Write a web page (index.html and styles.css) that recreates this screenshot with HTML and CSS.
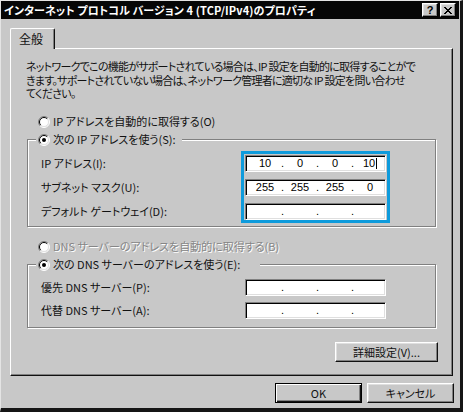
FILE: index.html
```html
<!DOCTYPE html>
<html lang="ja">
<head>
<meta charset="utf-8">
<title>インターネット プロトコル バージョン 4 (TCP/IPv4)のプロパティ</title>
<link rel="stylesheet" href="styles.css">
</head>
<body>
<div class="window">
  <div class="titlebar">
    <span class="title">インターネット プロトコル バージョン 4 (TCP/IPv4)のプロパティ</span>
    <div class="tbtns">
      <span class="tbtn help">?</span>
      <span class="tbtn close"><svg width="8" height="7" viewBox="0 0 8 7" shape-rendering="crispEdges"><g fill="#000"><rect x="0" y="0" width="2" height="1"/><rect x="6" y="0" width="2" height="1"/><rect x="1" y="1" width="2" height="1"/><rect x="5" y="1" width="2" height="1"/><rect x="2" y="2" width="4" height="1"/><rect x="3" y="3" width="2" height="1"/><rect x="2" y="4" width="4" height="1"/><rect x="1" y="5" width="2" height="1"/><rect x="5" y="5" width="2" height="1"/><rect x="0" y="6" width="2" height="1"/><rect x="6" y="6" width="2" height="1"/></g></svg></span>
    </div>
  </div>
  <div class="content">
    <div class="tabs"><div class="tab">全般</div></div>
    <div class="panel">
      <p class="desc">ネットワークでこの機能がサポートされている場合は、IP 設定を自動的に取得することがで<br>きます。サポートされていない場合は、ネットワーク管理者に適切な IP 設定を問い合わせ<br>てください。</p>

      <div class="radio-row">
        <svg class="radio" width="12" height="12" viewBox="0 0 12 12"><circle cx="6" cy="6" r="5" fill="#fff"/><path d="M2.1 9.9A5.5 5.5 0 0 1 9.9 2.1" stroke="#808080" fill="none"/><path d="M9.9 2.1A5.5 5.5 0 0 1 2.1 9.9" stroke="#fff" fill="none"/><path d="M2.8 9.2A4.5 4.5 0 0 1 9.2 2.8" stroke="#000" fill="none"/><path d="M9.2 2.8A4.5 4.5 0 0 1 2.8 9.2" stroke="#dfdfdf" fill="none"/></svg>
        <span>IP アドレスを自動的に取得する(O)</span>
      </div>

      <fieldset class="group g1">
        <legend class="radio-row legend">
          <svg class="radio" width="12" height="12" viewBox="0 0 12 12"><circle cx="6" cy="6" r="5" fill="#fff"/><path d="M2.1 9.9A5.5 5.5 0 0 1 9.9 2.1" stroke="#808080" fill="none"/><path d="M9.9 2.1A5.5 5.5 0 0 1 2.1 9.9" stroke="#fff" fill="none"/><path d="M2.8 9.2A4.5 4.5 0 0 1 9.2 2.8" stroke="#000" fill="none"/><path d="M9.2 2.8A4.5 4.5 0 0 1 2.8 9.2" stroke="#dfdfdf" fill="none"/><circle cx="6" cy="6" r="2" fill="#000"/></svg>
          <span>次の IP アドレスを使う(S):</span>
        </legend>
        <div class="group-body">
          <div class="labels">
            <span class="label">IP アドレス(I):</span>
            <span class="label">サブネット マスク(U):</span>
            <span class="label">デフォルト ゲートウェイ(D):</span>
          </div>
          <div class="fields highlight">
            <div class="ipfield"><span class="oct">10</span><span class="dot">.</span><span class="oct">0</span><span class="dot">.</span><span class="oct">0</span><span class="dot">.</span><span class="oct">10<span class="caret"></span></span></div>
            <div class="ipfield"><span class="oct">255</span><span class="dot">.</span><span class="oct">255</span><span class="dot">.</span><span class="oct">255</span><span class="dot">.</span><span class="oct">0</span></div>
            <div class="ipfield"><span class="oct"></span><span class="dot">.</span><span class="oct"></span><span class="dot">.</span><span class="oct"></span><span class="dot">.</span><span class="oct"></span></div>
          </div>
        </div>
      </fieldset>

      <div class="radio-row disabled r3">
        <svg class="radio" width="12" height="12" viewBox="0 0 12 12"><circle cx="6" cy="6" r="5" fill="#fff"/><path d="M2.1 9.9A5.5 5.5 0 0 1 9.9 2.1" stroke="#808080" fill="none"/><path d="M9.9 2.1A5.5 5.5 0 0 1 2.1 9.9" stroke="#fff" fill="none"/><path d="M2.8 9.2A4.5 4.5 0 0 1 9.2 2.8" stroke="#000" fill="none"/><path d="M9.2 2.8A4.5 4.5 0 0 1 2.8 9.2" stroke="#dfdfdf" fill="none"/></svg>
        <span>DNS サーバーのアドレスを自動的に取得する(B)</span>
      </div>

      <fieldset class="group g2">
        <legend class="radio-row legend">
          <svg class="radio" width="12" height="12" viewBox="0 0 12 12"><circle cx="6" cy="6" r="5" fill="#fff"/><path d="M2.1 9.9A5.5 5.5 0 0 1 9.9 2.1" stroke="#808080" fill="none"/><path d="M9.9 2.1A5.5 5.5 0 0 1 2.1 9.9" stroke="#fff" fill="none"/><path d="M2.8 9.2A4.5 4.5 0 0 1 9.2 2.8" stroke="#000" fill="none"/><path d="M9.2 2.8A4.5 4.5 0 0 1 2.8 9.2" stroke="#dfdfdf" fill="none"/><circle cx="6" cy="6" r="2" fill="#000"/></svg>
          <span>次の DNS サーバーのアドレスを使う(E):</span>
        </legend>
        <div class="group-body">
          <div class="labels">
            <span class="label">優先 DNS サーバー(P):</span>
            <span class="label">代替 DNS サーバー(A):</span>
          </div>
          <div class="fields">
            <div class="ipfield"><span class="oct"></span><span class="dot">.</span><span class="oct"></span><span class="dot">.</span><span class="oct"></span><span class="dot">.</span><span class="oct"></span></div>
            <div class="ipfield"><span class="oct"></span><span class="dot">.</span><span class="oct"></span><span class="dot">.</span><span class="oct"></span><span class="dot">.</span><span class="oct"></span></div>
          </div>
        </div>
      </fieldset>

      <div class="detail-row"><button class="btn detail">詳細設定(V)...</button></div>
    </div>
    <div class="footer">
      <button class="btn default">OK</button>
      <button class="btn">キャンセル</button>
    </div>
  </div>
</div>
</body>
</html>
```

FILE: styles.css
```css
* { box-sizing: border-box; }

body {
  margin: 0;
  background: #c8c8c8;
  font-family: "Noto Sans CJK JP", "Noto Sans", sans-serif;
  font-size: 11px;
  line-height: 1;
  font-feature-settings: "palt";
  color: #111;
}

.window {
  width: 463px;
  height: 412px;
  background: #c8c8c8;
  border-left: 1px solid #e4e4e4;
  border-top: 1px solid #e4e4e4;
  border-right: 3px solid #151515;
  border-bottom: 4px solid #151515;
  display: flex;
  flex-direction: column;
}

/* title bar */
.titlebar {
  height: 18px;
  margin-right: 1px;
  background: #060606;
  color: #fff;
  display: flex;
  align-items: center;
  justify-content: space-between;
  padding: 0 3px 0 3px;
}
.title {
  font-weight: bold;
  font-size: 11px;
  letter-spacing: 0.1px;
  white-space: nowrap;
}
.tbtns { display: flex; gap: 2px; }
.tbtn {
  width: 16px;
  height: 14px;
  background: #c8c8c8;
  border: 1px solid;
  border-color: #fff #000 #000 #fff;
  box-shadow: inset -1px -1px #808080, inset 1px 1px #dfdfdf;
  display: flex;
  align-items: center;
  justify-content: center;
  color: #000;
}
.help {
  font-family: "Liberation Sans", Arial, sans-serif;
  font-weight: bold;
  font-size: 11px;
}

/* content */
.content {
  flex: 1;
  padding: 9px 7px 0 9px;
  display: flex;
  flex-direction: column;
}
.tabs { display: flex; height: 20px; }
.tab {
  width: 45px;
  height: 21px;
  margin-bottom: -1px;
  position: relative;
  z-index: 1;
  background: #c8c8c8;
  border-left: 1px solid #fff;
  border-top: 1px solid #fff;
  border-right: 1px solid #111;
  border-radius: 2px 2px 0 0;
  box-shadow: inset -1px 0 #808080;
  padding: 4px 0 0 8px;
  font-size: 12px;
}

.panel {
  border-left: 1px solid #fff;
  border-top: 1px solid #fff;
  border-right: 1px solid #111;
  border-bottom: 1px solid #111;
  box-shadow: inset -1px -1px #808080;
  padding: 0 16px 13px 16px;
  display: flex;
  flex-direction: column;
}

.desc {
  margin: 11px 0 0 -1px;
  line-height: 13.5px;
  letter-spacing: -0.75px;
  white-space: nowrap;
}

.radio-row {
  display: flex;
  align-items: center;
  gap: 3px;
  height: 16px;
  padding-left: 11px;
  margin-top: 13px;
  white-space: nowrap;
}
.radio { flex: none; }
.disabled { color: #868686; text-shadow: 1px 1px 0 #fff; }
.r3 { margin-top: 12px; }

.group {
  margin: 2px 0 0 0;
  padding: 0;
  min-width: 0;
  border: 1px solid #808080;
  box-shadow: 1px 1px 0 #fff, inset 1px 1px 0 #fff;
}
.legend {
  margin: 0 0 0 8px;
  padding: 0 6px 0 2px;
  background: #c8c8c8;
}
.g2 .legend { padding-right: 20px; }
.group-body {
  display: grid;
  grid-template-columns: 1fr auto;
  padding: 3px 45px 3px 13px;
}
.g2 .group-body { padding-top: 2px; padding-bottom: 5px; }

.labels {
  display: flex;
  flex-direction: column;
  gap: 7px;
  padding-top: 4px;
}
.g2 .labels { gap: 6px; }
.label {
  height: 17px;
  display: flex;
  align-items: center;
  white-space: nowrap;
}

.fields {
  display: flex;
  flex-direction: column;
  gap: 7px;
  border: 3px solid transparent;
  padding: 1px 1px 0 1px;
}
.g2 .fields { gap: 6px; }
.highlight { border-color: #0e9bdc; }

.ipfield {
  width: 141px;
  height: 17px;
  background: #fff;
  border: 1px solid;
  border-color: #808080 #fff #fff #808080;
  box-shadow: inset 1px 1px #000, inset -1px -1px #dfdfdf;
  padding: 1px 0 0 5px;
  display: grid;
  grid-template-columns: 28px 7px 28px 7px 28px 7px 28px;
  align-items: center;
  font-family: "Liberation Sans", Arial, sans-serif;
  font-size: 11px;
  color: #000;
}
.oct { text-align: center; white-space: nowrap; }
.dot { text-align: center; }
.caret {
  display: inline-block;
  width: 1px;
  height: 11px;
  background: #000;
  margin-left: 1px;
  vertical-align: -2px;
}

.detail-row {
  display: flex;
  justify-content: flex-end;
  margin: 14px -2px 0 0;
}

.btn {
  font-family: "Noto Sans CJK JP", "Noto Sans", sans-serif;
  font-feature-settings: "palt";
  font-size: 11px;
  color: #111;
  background: #c8c8c8;
  border: 1px solid;
  border-color: #fff #111 #111 #fff;
  box-shadow: inset -1px -1px #808080, inset 1px 1px #dfdfdf;
  height: 20px;
  padding: 0;
  margin: 0;
}
.detail { width: 103px; }

.footer {
  display: flex;
  justify-content: flex-end;
  gap: 5px;
  margin: 7px -1px 0 0;
}
.footer .btn { width: 87px; }
.btn.default {
  border-color: #000;
  box-shadow: inset 1px 1px #fff, inset -1px -1px #111, inset -2px -2px #808080;
}
```
